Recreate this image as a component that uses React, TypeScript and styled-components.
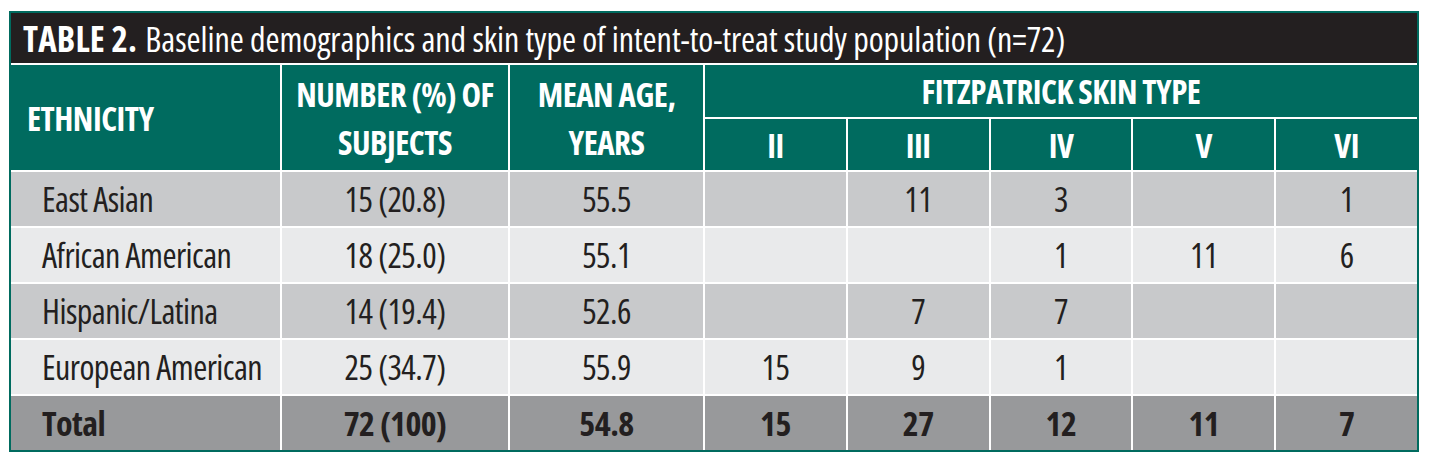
import React from "react";
import styled, { createGlobalStyle } from "styled-components";

const TEAL = "#006b5f";
const INK = "#231f20";

const Global = createGlobalStyle`
  html, body { margin: 0; padding: 0; background: #ffffff; }
  body { font-family: "Open Sans", "Liberation Sans", sans-serif; }
`;

const Page = styled.div`
  padding: 11px 11px 0 9px;
`;

const Grid = styled.div`
  width: 1410px;
  box-sizing: border-box;
  border: 2px solid ${TEAL};
  display: grid;
  grid-template-columns: 269px 226px 193px repeat(5, 1fr);
  grid-template-rows: 50px 52px 51px repeat(5, 54px);
  gap: 2px;
  background: #ffffff;
  font-family: "Open Sans", "Liberation Sans", sans-serif;
  font-stretch: 75%;
`;

const Title = styled.div`
  grid-column: 1 / -1;
  background: ${INK};
  color: #ffffff;
  font-size: 34px;
  letter-spacing: -0.05px;
  display: flex;
  align-items: center;
  padding-left: 12px;
  padding-top: 1px;
  white-space: nowrap;
  b { font-weight: 700; font-size: 35px; margin-right: 8px; letter-spacing: 0.2px; }
`;

const Head = styled.div<{ $rows?: number; $cols?: number; $left?: boolean }>`
  grid-row: span ${(p) => p.$rows || 1};
  grid-column: span ${(p) => p.$cols || 1};
  background: ${TEAL};
  color: #ffffff;
  font-weight: 700;
  font-size: 33px;
  line-height: 48px;
  letter-spacing: -0.5px;
  display: flex;
  align-items: center;
  justify-content: ${(p) => (p.$left ? "flex-start" : "center")};
  text-align: ${(p) => (p.$left ? "left" : "center")};
  padding-left: ${(p) => (p.$left ? "16px" : "0")};
  padding-top: 2px;
`;

const Cell = styled.div<{ $tone: "dark" | "light" | "total"; $left?: boolean }>`
  background: ${(p) =>
    p.$tone === "dark" ? "#c8c9cb" : p.$tone === "light" ? "#e9eaeb" : "#98999b"};
  color: ${INK};
  font-size: 34px;
  font-weight: ${(p) => (p.$tone === "total" ? 700 : 400)};
  letter-spacing: -0.55px;
  display: flex;
  align-items: center;
  justify-content: ${(p) => (p.$left ? "flex-start" : "center")};
  padding-left: ${(p) => (p.$left ? "31px" : "0")};
  white-space: nowrap;
`;

type RowData = { label: string; n: string; age: string; f: string[] };

const rows: RowData[] = [
  { label: "East Asian", n: "15 (20.8)", age: "55.5", f: ["", "11", "3", "", "1"] },
  { label: "African American", n: "18 (25.0)", age: "55.1", f: ["", "", "1", "11", "6"] },
  { label: "Hispanic/Latina", n: "14 (19.4)", age: "52.6", f: ["", "7", "7", "", ""] },
  { label: "European American", n: "25 (34.7)", age: "55.9", f: ["15", "9", "1", "", ""] },
];

const total: RowData = { label: "Total", n: "72 (100)", age: "54.8", f: ["15", "27", "12", "11", "7"] };

function DataRow({ r, tone }: { r: RowData; tone: "dark" | "light" | "total" }) {
  return (
    <>
      <Cell $tone={tone} $left>{r.label}</Cell>
      <Cell $tone={tone}>{r.n}</Cell>
      <Cell $tone={tone}>{r.age}</Cell>
      {r.f.map((v, i) => (
        <Cell key={i} $tone={tone}>{v}</Cell>
      ))}
    </>
  );
}

export default function App() {
  return (
    <Page>
      <Global />
      <Grid>
        <Title>
          <b>TABLE 2.</b>Baseline demographics and skin type of intent-to-treat study population (n=72)
        </Title>
        <Head $rows={2} $left>ETHNICITY</Head>
        <Head $rows={2}>NUMBER (%) OF<br />SUBJECTS</Head>
        <Head $rows={2}>MEAN AGE,<br />YEARS</Head>
        <Head $cols={5}>FITZPATRICK SKIN TYPE</Head>
        {["II", "III", "IV", "V", "VI"].map((t) => (
          <Head key={t}>{t}</Head>
        ))}
        {rows.map((r, i) => (
          <DataRow key={r.label} r={r} tone={i % 2 === 0 ? "dark" : "light"} />
        ))}
        <DataRow r={total} tone="total" />
      </Grid>
    </Page>
  );
}
